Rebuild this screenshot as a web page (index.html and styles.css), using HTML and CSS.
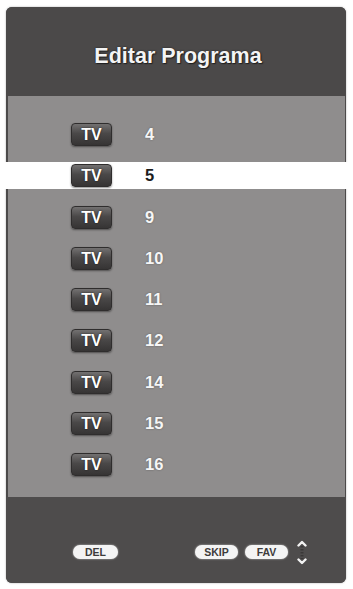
FILE: index.html
```html
<!DOCTYPE html>
<html>
<head>
<meta charset="utf-8">
<link rel="stylesheet" href="styles.css">
</head>
<body>
<div class="panel">
  <div class="header"><h1 class="title">Editar Programa</h1></div>
  <div class="list">
    <div class="row"><span class="badge">TV</span><span class="num">4</span></div>
    <div class="row selected"><span class="badge">TV</span><span class="num">5</span></div>
    <div class="row"><span class="badge">TV</span><span class="num">9</span></div>
    <div class="row"><span class="badge">TV</span><span class="num">10</span></div>
    <div class="row"><span class="badge">TV</span><span class="num">11</span></div>
    <div class="row"><span class="badge">TV</span><span class="num">12</span></div>
    <div class="row"><span class="badge">TV</span><span class="num">14</span></div>
    <div class="row"><span class="badge">TV</span><span class="num">15</span></div>
    <div class="row"><span class="badge">TV</span><span class="num">16</span></div>
  </div>
  <div class="footer">
    <span class="pill del">DEL</span>
    <div class="right">
      <span class="pill">SKIP</span>
      <span class="pill">FAV</span>
      <svg class="updown" width="10" height="25" viewBox="0 0 10 25">
        <path d="M5 6 L5 19" stroke="#3a3838" stroke-width="3" stroke-dasharray="1.5 1.5" fill="none"/>
        <path d="M1.5 5.5 L5 2 L8.5 5.5" stroke="#f2f2f2" stroke-width="2.4" fill="none" stroke-linecap="round" stroke-linejoin="round"/>
        <path d="M1.5 19.5 L5 23 L8.5 19.5" stroke="#f2f2f2" stroke-width="2.4" fill="none" stroke-linecap="round" stroke-linejoin="round"/>
      </svg>
    </div>
  </div>
</div>
</body>
</html>
```

FILE: styles.css
```css
html, body {
  margin: 0;
  padding: 0;
  background: #ffffff;
}
body {
  font-family: "Liberation Sans", Arial, sans-serif;
  width: 353px;
  height: 589px;
  overflow: hidden;
}
.panel {
  margin: 7px 7px 0 6px;
  width: 340px;
  height: 576px;
  border-radius: 6px;
  background: #4c4a4a;
  box-shadow: 0 0 2px rgba(0,0,0,0.35);
  display: flex;
  flex-direction: column;
}
.header {
  height: 89px;
  border-radius: 6px 6px 0 0;
  background: #4b4949;
  box-sizing: border-box;
  padding-top: 38px;
  text-align: center;
}
.title {
  margin: 0;
  padding-left: 4px;
  font-size: 21.5px;
  line-height: 22px;
  font-weight: bold;
  color: #f4f4f4;
  text-shadow: 0 0 2px rgba(0,0,0,0.6), 1px 1px 1px rgba(0,0,0,0.5);
}
.list {
  height: 401px;
  margin: 0 1px 0 2px;
  background: #8f8d8d;
  box-sizing: border-box;
  padding-top: 25px;
  display: flex;
  flex-direction: column;
  gap: 14.25px;
}
.row {
  height: 27px;
  display: flex;
  align-items: center;
  padding-left: 63px;
}
.row.selected {
  background: #ffffff;
  margin-left: -8px;
  margin-right: -8px;
  padding-left: 71px;
}
.badge {
  width: 41px;
  height: 23px;
  box-sizing: border-box;
  border: 1px solid #2f2d2d;
  border-radius: 4px;
  background: linear-gradient(#737171, #4a4848 45%, #363434);
  box-shadow: 0 1px 2px rgba(0,0,0,0.45);
  color: #ffffff;
  font-weight: bold;
  font-size: 16px;
  line-height: 21px;
  text-align: center;
  text-shadow: 0 0 2px rgba(0,0,0,0.7);
}
.num {
  margin-left: 33px;
  font-weight: bold;
  font-size: 16.5px;
  color: #f6f6f6;
  text-shadow: 0 0 2px rgba(0,0,0,0.35);
}
.selected .num {
  color: #1c1c1c;
  text-shadow: none;
}
.footer {
  flex: 1;
  display: flex;
  align-items: center;
  padding: 24px 39px 0 67px;
  border-radius: 0 0 6px 6px;
  background: #4e4c4c;
}
.pill {
  width: 44px;
  height: 14px;
  border-radius: 7px;
  background: #f4f4f4;
  box-shadow: 0 0 2px rgba(255,255,255,0.7);
  color: #3e3c3c;
  font-weight: bold;
  font-size: 10.5px;
  line-height: 14px;
  text-align: center;
}
.del {
  width: 45px;
}
.right {
  margin-left: auto;
  display: flex;
  align-items: center;
  gap: 7px;
}
.right .pill {
  width: 43px;
}
.updown {
  display: block;
  margin-left: 2px;
}
```
